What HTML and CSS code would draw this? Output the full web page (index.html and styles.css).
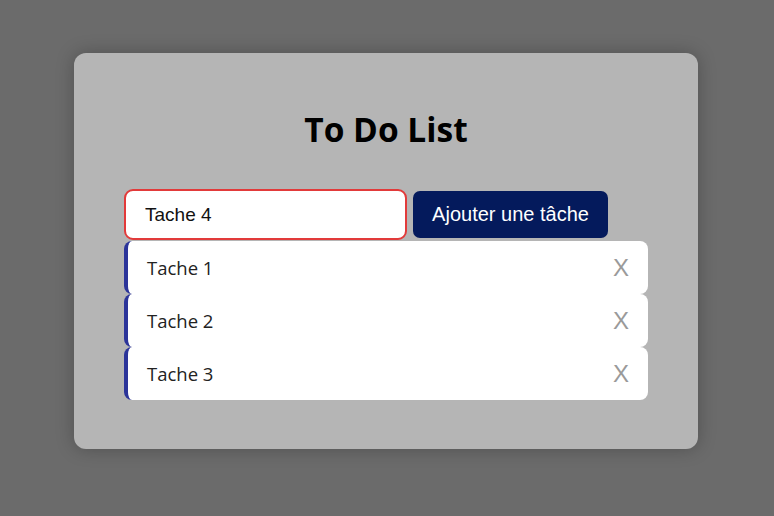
FILE: index.html
```html
<!DOCTYPE html>
<html lang="fr">
<head>
<meta charset="utf-8">
<title>To Do List</title>
<link rel="stylesheet" href="styles.css">
</head>
<body>
<div class="card">
  <h1 class="title">To Do List</h1>
  <div class="form">
    <input class="task-input" type="text" value="Tache 4">
    <button class="add-btn">Ajouter une tâche</button>
  </div>
  <ul class="list">
    <li class="item"><span class="label">Tache 1</span><span class="del">X</span></li>
    <li class="item"><span class="label">Tache 2</span><span class="del">X</span></li>
    <li class="item"><span class="label">Tache 3</span><span class="del">X</span></li>
  </ul>
</div>
</body>
</html>
```
FILE: styles.css
```css
html, body {
  margin: 0;
  padding: 0;
}
body {
  background: #6b6b6b;
  height: 516px;
  display: flex;
  justify-content: flex-start;
  align-items: flex-start;
  padding: 53px 0 0 74px;
  box-sizing: border-box;
  font-family: "Open Sans", "Noto Sans", sans-serif;
}
.card {
  width: 624px;
  height: 396px;
  box-sizing: border-box;
  background: #b5b5b5;
  border-radius: 12px;
  padding: 52px 50px 0;
  box-shadow: 0 0 18px rgba(0,0,0,0.25);
}
.title {
  margin: 0 0 36px;
  text-align: center;
  font-size: 33.5px;
  line-height: 48px;
  font-weight: 700;
  color: #000;
}
.form {
  display: flex;
  align-items: center;
  gap: 6px;
  margin-bottom: 1px;
}
.task-input {
  width: 283px;
  height: 51px;
  box-sizing: border-box;
  border: 2px solid #e23a3a;
  border-radius: 9px;
  padding: 0 19px;
  font-family: "Liberation Sans", Arial, sans-serif;
  font-size: 19px;
  color: #111;
  background: #fff;
  outline: none;
}
.add-btn {
  width: 195px;
  height: 47px;
  border: none;
  border-radius: 7px;
  background: #041a5c;
  color: #fff;
  font-family: "Liberation Sans", Arial, sans-serif;
  font-size: 20px;
  padding: 0;
}
.list {
  list-style: none;
  margin: 0;
  padding: 0;
}
.item {
  height: 53px;
  box-sizing: border-box;
  background: #fff;
  border-left: 4px solid #2b3499;
  border-radius: 8px;
  display: flex;
  align-items: center;
  justify-content: space-between;
  padding: 0 19px 0 19px;
}
.label {
  font-size: 18.5px;
  color: #222;
}
.del {
  font-family: "Liberation Sans", Arial, sans-serif;
  font-size: 24px;
  color: #9a9a9a;
}
```
